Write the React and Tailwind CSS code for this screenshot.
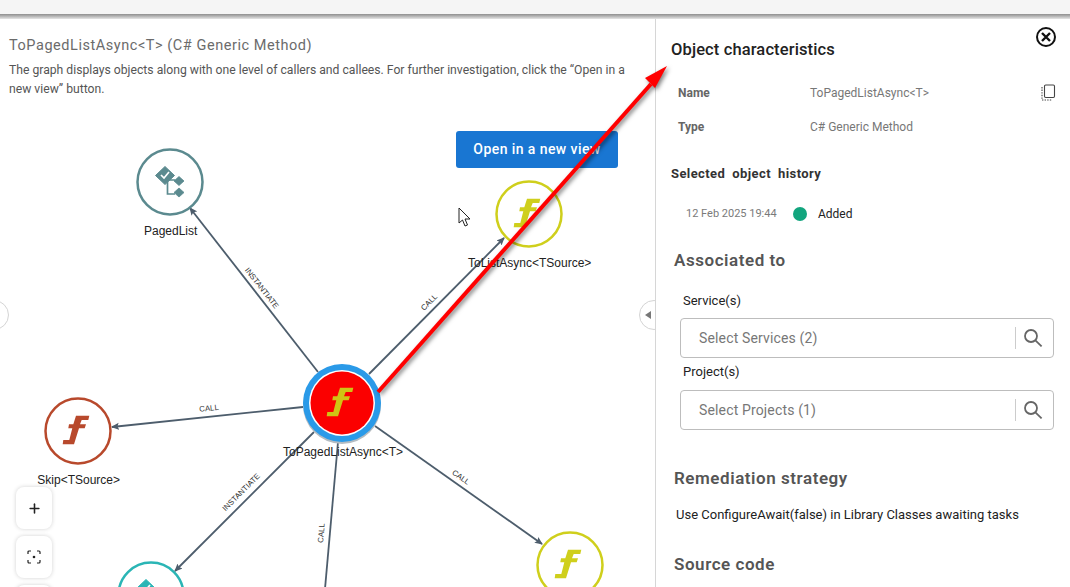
import React from 'react'
import { Plus } from 'lucide-react'

const EDGE = '#4d5d6c'
const ARIAL = 'Liberation Sans, Arial, sans-serif'

const edges = [
  [318, 372, 190, 208],
  [369, 374, 504, 238],
  [303, 407, 112, 427],
  [314, 432, 175, 571],
  [338, 442, 324, 600],
  [375, 426, 542, 544],
]

const edgeLabels = [
  { text: 'INSTANTIATE', x: 259.8, y: 289.7, angle: 52 },
  { text: 'CALL', x: 431, y: 304, angle: -45 },
  { text: 'CALL', x: 209.3, y: 410.8, angle: -6 },
  { text: 'INSTANTIATE', x: 243, y: 494, angle: -45 },
  { text: 'CALL', x: 323.8, y: 533.2, angle: -85 },
  { text: 'CALL', x: 459.4, y: 479.3, angle: 35 },
]

const FUNC_PATH = 'M-2,-15.3 L11.3,-15.3 L10.3,-11 L3.7,-11 L2,-6.7 L8,-6.7 L6.7,-2.7 L1,-2.7 L-4,13.3 L-15.3,13.3 L-14.7,9 L-8.7,9 L-5.7,-2.7 L-9.7,-2.7 L-9,-6.7 L-4.7,-6.7 Z'

const NodeLabel = ({ x, y, children }) => (
  <text x={x} y={y} textAnchor="middle" fontSize="12" fill="#222" fontFamily={ARIAL}>{children}</text>
)

const FuncNode = ({ x, y, color, label, labelY }) => (
  <g>
    <circle cx={x} cy={y} r="32.5" fill="#fff" stroke={color} strokeWidth="2.5" />
    <path d={FUNC_PATH} transform={`translate(${x} ${y})`} fill={color} />
    {label && <NodeLabel x={x + 0.7} y={labelY}>{label}</NodeLabel>}
  </g>
)

const ClassNode = ({ x, y, color, label, labelY }) => (
  <g>
    <circle cx={x} cy={y} r="32.5" fill="#fff" stroke={color} strokeWidth="2.5" />
    <g transform={`translate(${x} ${y})`}>
      <path d="M-2.5,-4 V12 H5 M-2.5,-2 H5" fill="none" stroke={color} strokeWidth="1.7" />
      <path d="M-5,-15.5 L4.5,-6.5 L-5,2.5 L-14.5,-6.5 Z" fill={color} stroke={color} strokeWidth="1" strokeLinejoin="round" />
      <path d="M-9,-7 L-6,-4 L-1,-10" fill="none" stroke="#fff" strokeWidth="1.7" />
      <path d="M9,-5.5 L14,-1 L9,3.5 L4,-1 Z" fill={color} stroke={color} strokeWidth="0.8" strokeLinejoin="round" />
      <path d="M9,6 L14,10.5 L9,15 L4,10.5 Z" fill={color} stroke={color} strokeWidth="0.8" strokeLinejoin="round" />
    </g>
    {label && <NodeLabel x={x + 0.7} y={labelY}>{label}</NodeLabel>}
  </g>
)

const Graph = () => (
  <svg className="absolute left-0 top-0" width="655" height="568" viewBox="0 19 655 568">
    <defs>
      <marker id="tip" viewBox="0 0 8 8" refX="7" refY="4" markerWidth="8" markerHeight="8" markerUnits="userSpaceOnUse" orient="auto">
        <path d="M0,0.5 L8,4 L0,7.5 L1.5,4 Z" fill={EDGE} />
      </marker>
    </defs>
    {edges.map(([x1, y1, x2, y2], i) => (
      <line key={i} x1={x1} y1={y1} x2={x2} y2={y2} stroke={EDGE} strokeWidth="1.8" markerEnd="url(#tip)" />
    ))}
    {edgeLabels.map((l, i) => (
      <text key={i} x={l.x} y={l.y} transform={`rotate(${l.angle} ${l.x} ${l.y})`} textAnchor="middle" fontSize="7.8" fill="#333" fontFamily={ARIAL}>{l.text}</text>
    ))}
    <ClassNode x={170} y={182} color="#5b8a8f" label="PagedList" labelY={235} />
    <FuncNode x={529} y={214} color="#cfcf1c" label="ToListAsync<TSource>" labelY={267} />
    <FuncNode x={78} y={431} color="#b8492c" label="Skip<TSource>" labelY={484} />
    <FuncNode x={570} y={565} color="#cfcf1c" />
    <ClassNode x={151} y={595} color="#2ab5b5" />
    <circle cx="342" cy="405" r="39" fill="#b4bcc2" />
    <circle cx="342" cy="403" r="39" fill="#2a9ae8" />
    <circle cx="342" cy="403" r="33" fill="#fff" />
    <circle cx="342" cy="403" r="31.5" fill="#fb0000" />
    <path d={FUNC_PATH} transform="translate(342 403)" fill="#cfc414" />
    <NodeLabel x={343} y={455.5}>ToPagedListAsync&lt;T&gt;</NodeLabel>
  </svg>
)

const ZoomCard = ({ children }) => (
  <div className="flex h-[42px] w-[36px] items-center justify-center rounded-lg bg-white shadow-[0_0_4px_rgba(0,0,0,0.18)]">
    {children}
  </div>
)

const Handle = ({ className, children }) => (
  <div className={`absolute top-[281px] flex h-[30px] w-[30px] items-center justify-center rounded-full border border-[#d4d4d4] bg-white ${className}`}>
    {children}
  </div>
)

const GraphPanel = () => (
  <div className="relative h-full w-[656px] shrink-0 overflow-hidden border-r border-[#d6d6d6] bg-white">
    <Graph />
    <div className="relative px-[9px] pt-[17px]">
      <h2 className="text-[14.5px] leading-[20px] tracking-[0.55px] text-[#6b6b6b]">ToPagedListAsync&lt;T&gt; (C# Generic Method)</h2>
      <p className="mt-[5px] w-[630px] text-[12.18px] leading-[19px] text-[#555]">
        The graph displays objects along with one level of callers and callees. For further investigation, click the “Open in a new view” button.
      </p>
    </div>
    <button className="absolute left-[456px] top-[112px] h-[37px] w-[162px] rounded-[3px] bg-[#1976d2] text-center text-[14px] font-medium tracking-[0.42px] text-white">
      Open in a new view
    </button>
    <Handle className="-left-[21px]" />
    <Handle className="left-[639px] justify-start pl-[5px]">
      <span className="h-0 w-0 border-y-[4px] border-r-[6px] border-y-transparent border-r-[#777]" />
    </Handle>
    <div className="absolute left-[16px] top-[468px] flex flex-col gap-[7px]">
      <ZoomCard><Plus size={15} strokeWidth={2.5} className="text-[#222]" /></ZoomCard>
      <ZoomCard>
        <svg width="14" height="14" viewBox="0 0 14 14" fill="none" stroke="#222" strokeWidth="1.2">
          <path d="M1,4 V2 A1,1 0 0 1 2,1 H4 M10,1 H12 A1,1 0 0 1 13,2 V4 M13,10 V12 A1,1 0 0 1 12,13 H10 M4,13 H2 A1,1 0 0 1 1,12 V10" />
          <circle cx="7" cy="7" r="1.3" fill="#222" stroke="none" />
        </svg>
      </ZoomCard>
      <ZoomCard />
    </div>
  </div>
)

const InfoRow = ({ label, value, children }) => (
  <div className="flex h-[34px] items-center pl-[22px] text-[12px]">
    <span className="w-[132px] font-bold text-[#666]">{label}</span>
    <span className="text-[#777]">{value}</span>
    {children}
  </div>
)

const SectionTitle = ({ className, children }) => (
  <h3 className={`pl-[18px] text-[17px] font-semibold leading-[22px] tracking-[0.55px] text-[#555] ${className}`}>{children}</h3>
)

const SelectBox = ({ text }) => (
  <div className="ml-[24px] flex h-[40px] w-[374px] items-center rounded-[4px] border border-[#bdbdbd] pl-[18px] pr-[10px]">
    <span className="flex-1 pt-px text-[14px] tracking-[0.15px] text-[#777]">{text}</span>
    <span className="mr-[7px] h-[22px] w-px bg-[#ccc]" />
    <svg width="20" height="20" viewBox="0 0 20 20" fill="none" stroke="#666" strokeWidth="1.8">
      <circle cx="8" cy="8" r="6" />
      <path d="M12.4,12.4 L18.6,18.4" />
    </svg>
  </div>
)

const SidePanel = () => (
  <div className="relative h-full flex-1 overflow-hidden bg-white">
    <svg className="absolute left-[380px] top-[8px]" width="20" height="20" viewBox="0 0 20 20" fill="none" stroke="#111" strokeWidth="2">
      <circle cx="10" cy="10" r="9" />
      <path d="M6,6 L14,14 M14,6 L6,14" strokeWidth="2.4" />
    </svg>
    <h2 className="pl-[15px] pt-[20px] text-[16.5px] font-medium leading-[22px] tracking-[0.12px] text-[#222]">Object characteristics</h2>
    <div className="mt-[15px]">
      <InfoRow label="Name" value="ToPagedListAsync<T>">
        <svg className="ml-auto mr-[14px]" width="16" height="18" viewBox="0 0 16 18" fill="none" stroke="#444" strokeWidth="1.1">
          <rect x="4.5" y="1" width="10" height="12.5" rx="1.2" />
          <path d="M2,3 V16 H12" strokeDasharray="1.4 1.2" />
        </svg>
      </InfoRow>
      <InfoRow label="Type" value="C# Generic Method" />
    </div>
    <h4 className="mt-[21px] pl-[15px] text-[13px] font-bold leading-[18px] tracking-[0.4px] text-[#333] [word-spacing:3.5px]">Selected object history</h4>
    <div className="mt-[22px] flex h-[18px] items-center pl-[30px]">
      <span className="w-[107px] text-[11px] text-[#7a7a7a]">12 Feb 2025 19:44</span>
      <span className="h-[14px] w-[14px] rounded-full bg-[#12a57e]" />
      <span className="ml-[11px] text-[12px] text-[#222]">Added</span>
    </div>
    <SectionTitle className="mt-[26px]">Associated to</SectionTitle>
    <div className="mt-[21px] pl-[27px] text-[13px] leading-[18px] text-[#222]">Service(s)</div>
    <div className="mt-[8px]"><SelectBox text="Select Services (2)" /></div>
    <div className="mt-[5px] pl-[27px] text-[13px] leading-[18px] text-[#222]">Project(s)</div>
    <div className="mt-[9px]"><SelectBox text="Select Projects (1)" /></div>
    <SectionTitle className="mt-[37px]">Remediation strategy</SectionTitle>
    <p className="mt-[17px] pl-[20px] text-[13px] leading-[18px] text-[#222]">Use ConfigureAwait(false) in Library Classes awaiting tasks</p>
    <SectionTitle className="mt-[29px]">Source code</SectionTitle>
  </div>
)

export default function App() {
  return (
    <div className="relative flex h-[587px] w-full flex-col overflow-hidden bg-white" style={{ fontFamily: 'Roboto, sans-serif' }}>
      <div className="h-[14px] shrink-0 bg-[#f5f5f5]" />
      <div className="h-[5px] shrink-0 bg-gradient-to-b from-[#8f8f8f] to-[#e6e6e6]" />
      <div className="flex min-h-0 flex-1">
        <GraphPanel />
        <SidePanel />
      </div>

      {/* annotation drawn over the screenshot */}
      <svg className="absolute left-0 top-0 drop-shadow-[2px_2px_2px_rgba(0,0,0,0.5)]" width="1070" height="587" viewBox="0 0 1070 587">
        <path d="M378,392 L651,84" stroke="#ff0000" strokeWidth="4" fill="none" />
        <path d="M667,66 L655,88 L645,78 Z" fill="#ff0000" />
      </svg>

      {/* mouse pointer */}
      <svg className="absolute left-[458px] top-[207px]" width="14" height="21" viewBox="0 0 14 21" fill="#fff" stroke="#222" strokeWidth="1">
        <path d="M1,1 V16 L4.5,13 L7,19 L9.5,18 L7,12 H12 Z" />
      </svg>
    </div>
  )
}
